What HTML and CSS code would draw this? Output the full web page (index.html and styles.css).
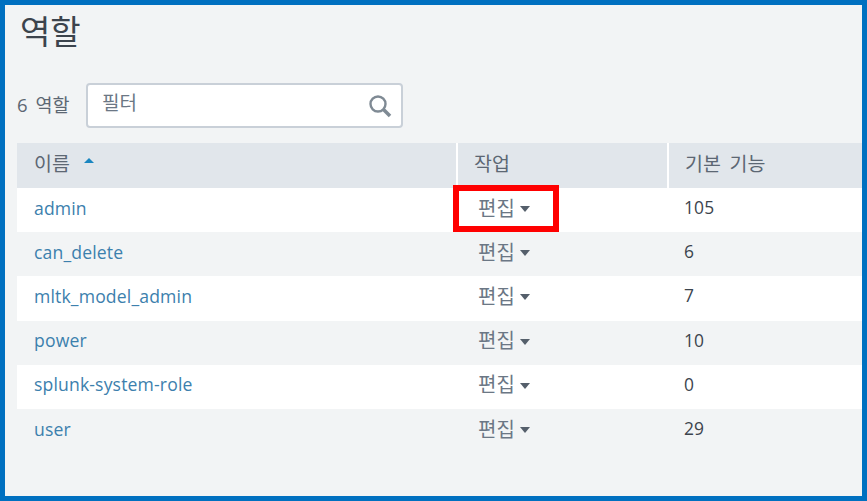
FILE: index.html
```html
<!DOCTYPE html>
<html lang="ko">
<head>
    <meta charset="utf-8">
    <title>역할</title>
    <link rel="stylesheet" href="styles.css">
</head>
<body>
<div class="frame">
    <h1 class="page_title">역할</h1>
    <div class="toolbar">
        <span class="count">6 역할</span>
        <div class="filter">
            <span class="filter_text">필터</span>
            <svg class="search_icon" width="24" height="24" viewBox="0 0 24 24">
                <circle cx="10" cy="10" r="7.5" fill="none" stroke="#7f8a94" stroke-width="2.4"/>
                <path d="M15.5 15.5L22 22" stroke="#7f8a94" stroke-width="3.6" fill="none"/>
            </svg>
        </div>
    </div>
    <div class="table">
        <div class="row head">
            <div class="cell">이름 <span class="sort_arrow"></span></div>
            <div class="cell">작업</div>
            <div class="cell">기본 기능</div>
        </div>
        <div class="row odd">
            <div class="cell"><a href="#">admin</a></div>
            <div class="cell action"><span class="edit">편집</span><span class="caret"></span><span class="highlight"></span></div>
            <div class="cell">105</div>
        </div>
        <div class="row">
            <div class="cell"><a href="#">can_delete</a></div>
            <div class="cell action"><span class="edit">편집</span><span class="caret"></span></div>
            <div class="cell">6</div>
        </div>
        <div class="row odd">
            <div class="cell"><a href="#">mltk_model_admin</a></div>
            <div class="cell action"><span class="edit">편집</span><span class="caret"></span></div>
            <div class="cell">7</div>
        </div>
        <div class="row">
            <div class="cell"><a href="#">power</a></div>
            <div class="cell action"><span class="edit">편집</span><span class="caret"></span></div>
            <div class="cell">10</div>
        </div>
        <div class="row odd">
            <div class="cell"><a href="#">splunk-system-role</a></div>
            <div class="cell action"><span class="edit">편집</span><span class="caret"></span></div>
            <div class="cell">0</div>
        </div>
        <div class="row">
            <div class="cell"><a href="#">user</a></div>
            <div class="cell action"><span class="edit">편집</span><span class="caret"></span></div>
            <div class="cell">29</div>
        </div>
    </div>
</div>
</body>
</html>
```

FILE: styles.css
```css
html, body {
    margin: 0;
    padding: 0;
}

body {
    font-family: "Open Sans", "Noto Sans CJK KR", sans-serif;
    color: #3c444d;
}

.frame {
    box-sizing: border-box;
    width: 867px;
    height: 501px;
    border: 5px solid #0070c0;
    background-color: #f2f4f5;
    padding: 0 0 0 12px;
    overflow: hidden;
}

.page_title {
    margin: 6px 0 0 3px;
    height: 42px;
    font-size: 33px;
    line-height: 42px;
    font-weight: 400;
}

.toolbar {
    display: flex;
    align-items: center;
    margin-top: 30px;
    height: 45px;
}

.count {
    width: 69px;
    font-size: 18.5px;
    word-spacing: 3px;
    color: #5c6773;
    margin-top: -3px;
}

.filter {
    box-sizing: border-box;
    display: flex;
    align-items: center;
    justify-content: space-between;
    width: 317px;
    height: 45px;
    padding: 0 9px 0 14px;
    background-color: #fff;
    border: 2px solid #c9d0d8;
    border-radius: 4px;
}

.filter_text {
    font-size: 19px;
    color: #6b7785;
    margin-top: -7px;
}

.table {
    margin-top: 15px;
}

.row {
    display: grid;
    grid-template-columns: 439px 211px 1fr;
    height: 44.2px;
    font-size: 17.4px;
    letter-spacing: 0.15px;
}

.row.odd {
    background-color: #fff;
}

.row.head {
    height: 45px;
    background-color: #e1e6eb;
    color: #5c6773;
    font-size: 19.5px;
    word-spacing: 3px;
}

.cell {
    box-sizing: border-box;
    display: flex;
    align-items: center;
    padding-left: 17px;
    padding-bottom: 6px;
}

.head .cell + .cell {
    border-left: 2px solid #fff;
    padding-left: 16px;
}

.cell a {
    font-size: 17.6px;
    margin-top: 1px;
    color: #3c80ad;
    text-decoration: none;
}

.action {
    position: relative;
    padding-left: 22px;
    color: #6b7785;
}

.edit {
    font-size: 20px;
}

.sort_arrow {
    width: 0;
    height: 0;
    margin: -4px 0 0 14px;
    border-left: 5px solid transparent;
    border-right: 5px solid transparent;
    border-bottom: 5px solid #1a86c0;
}

.caret {
    width: 0;
    height: 0;
    margin: 4px 0 0 5px;
    border-left: 5.5px solid transparent;
    border-right: 5.5px solid transparent;
    border-top: 6px solid #555f6b;
}

.highlight {
    position: absolute;
    box-sizing: border-box;
    left: -3px;
    top: -3px;
    width: 106px;
    height: 47px;
    border: 6px solid #ff0000;
}
```
